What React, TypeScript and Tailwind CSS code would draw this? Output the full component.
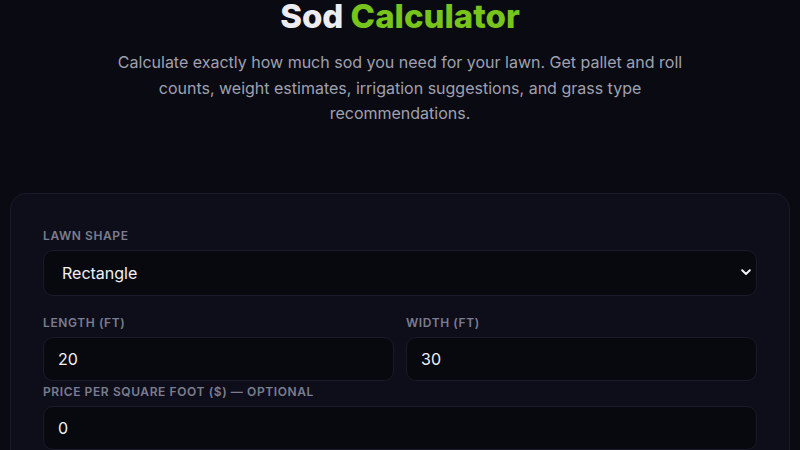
import React from "react";

function Label({ children }: { children: React.ReactNode }) {
  return (
    <div className="h-5 leading-5 text-[12px] font-semibold uppercase tracking-[0.05em] text-[#7b7d8f] mb-1">
      {children}
    </div>
  );
}

function Field({ value }: { value: string }) {
  return (
    <div className="h-[44px] rounded-[10px] border border-[#1a1a2a] bg-[#08080f] px-[14px] flex items-center text-[16px] text-[#f1f1f5]">
      {value}
    </div>
  );
}

export default function App() {
  return (
    <div
      className="min-h-screen bg-[#0a0a13] overflow-hidden"
      style={{ fontFamily: "Inter, 'Noto Sans', sans-serif" }}
    >
      <h1 className="-mt-1 text-center text-[33px] leading-[40px] font-extrabold">
        <span className="text-[#ececf1]">Sod </span>
        <span className="text-[#76c41c]">Calculator</span>
      </h1>
      <p className="mt-[14px] mx-auto max-w-[580px] text-center text-[16px] leading-[25.6px] text-[#9fa1b0]">
        Calculate exactly how much sod you need for your lawn. Get pallet and roll counts, weight estimates,
        irrigation suggestions, and grass type recommendations.
      </p>
      <div className="mx-[10px] mt-[66px] rounded-2xl border border-[#1a1a28] bg-[#0e0e1a] p-8 pb-10">
        <Label>Lawn Shape</Label>
        <div className="h-[46px] rounded-[10px] border border-[#1a1a2a] bg-[#08080f] pl-[18px] pr-[5px] flex items-center justify-between text-[16px] text-[#f1f1f5]">
          <span>Rectangle</span>
          <svg width="10" height="7" viewBox="0 0 10 7">
            <path d="M1.2 1.2 L5 5 L8.8 1.2" fill="none" stroke="#f1f1f5" strokeWidth="2" strokeLinecap="round" strokeLinejoin="round" />
          </svg>
        </div>
        <div className="mt-[17px] grid grid-cols-2 gap-x-3">
          <div>
            <Label>Length (ft)</Label>
            <Field value="20" />
          </div>
          <div>
            <Label>Width (ft)</Label>
            <Field value="30" />
          </div>
        </div>
        <div className="mt-px">
          <Label>Price per square foot ($) — Optional</Label>
          <Field value="0" />
        </div>
      </div>
    </div>
  );
}
